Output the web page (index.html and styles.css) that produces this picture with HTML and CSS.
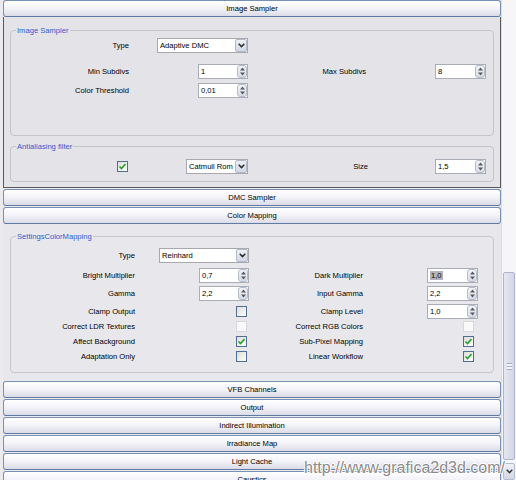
FILE: index.html
```html
<!DOCTYPE html>
<html>
<head>
<meta charset="utf-8">
<title>V-Ray Render Settings</title>
<link rel="stylesheet" href="styles.css">
</head>
<body>
<div class="window">
  <div class="content">
    <div class="rollout-head open">Image Sampler</div>
    <div class="rollout-body active">
      <div class="group g1">
        <span class="group-title">Image Sampler</span>
        <div class="row cols-a r-type">
          <span class="lbl">Type</span>
          <div class="combo w-type"><span class="combo-text">Adaptive DMC</span><span class="combo-btn"><svg width="7" height="5" viewBox="0 0 7 5"><path d="M0.7 0.7 L3.5 3.6 L6.3 0.7" fill="none" stroke="#2b2b2b" stroke-width="1.5"/></svg></span></div>
          <span></span><span></span>
        </div>
        <div class="row cols-a r-min">
          <span class="lbl">Min Subdivs</span>
          <div class="spin"><span class="spin-text">1</span><span class="spin-btn"><svg width="7" height="11" viewBox="0 0 7 11"><path d="M3.5 1.5 L6 4.5 L1 4.5Z M1 6.5 L6 6.5 L3.5 9.5Z" fill="#5a5a5a"/></svg></span></div>
          <span class="lbl">Max Subdivs</span>
          <div class="spin w51"><span class="spin-text">8</span><span class="spin-btn"><svg width="7" height="11" viewBox="0 0 7 11"><path d="M3.5 1.5 L6 4.5 L1 4.5Z M1 6.5 L6 6.5 L3.5 9.5Z" fill="#5a5a5a"/></svg></span></div>
        </div>
        <div class="row cols-a">
          <span class="lbl">Color Threshold</span>
          <div class="spin"><span class="spin-text">0,01</span><span class="spin-btn"><svg width="7" height="11" viewBox="0 0 7 11"><path d="M3.5 1.5 L6 4.5 L1 4.5Z M1 6.5 L6 6.5 L3.5 9.5Z" fill="#5a5a5a"/></svg></span></div>
          <span></span><span></span>
        </div>
      </div>
      <div class="group g2">
        <span class="group-title">Antialiasing filter</span>
        <div class="row cols-a">
          <span class="check on mr1"><svg width="9" height="9" viewBox="0 0 9 9"><path d="M1.5 4.5 L3.5 6.5 L7.5 2" fill="none" stroke="#22a22a" stroke-width="1.6"/></svg></span>
          <div class="combo w-filter"><span class="combo-text">Catmull Rom</span><span class="combo-btn"><svg width="7" height="5" viewBox="0 0 7 5"><path d="M0.7 0.7 L3.5 3.6 L6.3 0.7" fill="none" stroke="#2b2b2b" stroke-width="1.5"/></svg></span></div>
          <span class="lbl lbl-size">Size</span>
          <div class="spin w51"><span class="spin-text">1,5</span><span class="spin-btn"><svg width="7" height="11" viewBox="0 0 7 11"><path d="M3.5 1.5 L6 4.5 L1 4.5Z M1 6.5 L6 6.5 L3.5 9.5Z" fill="#5a5a5a"/></svg></span></div>
        </div>
      </div>
    </div>
    <div class="rollout-head">DMC Sampler</div>
    <div class="rollout-head open">Color Mapping</div>
    <div class="rollout-body">
      <div class="group g3">
        <span class="group-title">SettingsColorMapping</span>
        <div class="row cols-b r-type3">
          <span class="lbl">Type</span>
          <div class="combo w-type3"><span class="combo-text">Reinhard</span><span class="combo-btn"><svg width="7" height="5" viewBox="0 0 7 5"><path d="M0.7 0.7 L3.5 3.6 L6.3 0.7" fill="none" stroke="#2b2b2b" stroke-width="1.5"/></svg></span></div>
          <span></span><span></span>
        </div>
        <div class="row cols-b r-gap3">
          <span class="lbl">Bright Multiplier</span>
          <div class="spin"><span class="spin-text">0,7</span><span class="spin-btn"><svg width="7" height="11" viewBox="0 0 7 11"><path d="M3.5 1.5 L6 4.5 L1 4.5Z M1 6.5 L6 6.5 L3.5 9.5Z" fill="#5a5a5a"/></svg></span></div>
          <span class="lbl">Dark Multiplier</span>
          <div class="spin w51"><span class="spin-text"><span class="sel">1,0</span></span><span class="spin-btn"><svg width="7" height="11" viewBox="0 0 7 11"><path d="M3.5 1.5 L6 4.5 L1 4.5Z M1 6.5 L6 6.5 L3.5 9.5Z" fill="#5a5a5a"/></svg></span></div>
        </div>
        <div class="row cols-b r-gap3">
          <span class="lbl">Gamma</span>
          <div class="spin"><span class="spin-text">2,2</span><span class="spin-btn"><svg width="7" height="11" viewBox="0 0 7 11"><path d="M3.5 1.5 L6 4.5 L1 4.5Z M1 6.5 L6 6.5 L3.5 9.5Z" fill="#5a5a5a"/></svg></span></div>
          <span class="lbl">Input Gamma</span>
          <div class="spin w51"><span class="spin-text">2,2</span><span class="spin-btn"><svg width="7" height="11" viewBox="0 0 7 11"><path d="M3.5 1.5 L6 4.5 L1 4.5Z M1 6.5 L6 6.5 L3.5 9.5Z" fill="#5a5a5a"/></svg></span></div>
        </div>
        <div class="row cols-b">
          <span class="lbl">Clamp Output</span>
          <span class="check mr2"></span>
          <span class="lbl">Clamp Level</span>
          <div class="spin w51"><span class="spin-text">1,0</span><span class="spin-btn"><svg width="7" height="11" viewBox="0 0 7 11"><path d="M3.5 1.5 L6 4.5 L1 4.5Z M1 6.5 L6 6.5 L3.5 9.5Z" fill="#5a5a5a"/></svg></span></div>
        </div>
        <div class="row cols-b">
          <span class="lbl">Correct LDR Textures</span>
          <span class="check off mr2"></span>
          <span class="lbl">Correct RGB Colors</span>
          <span class="check off mr4"></span>
        </div>
        <div class="row cols-b">
          <span class="lbl">Affect Background</span>
          <span class="check on mr2"><svg width="9" height="9" viewBox="0 0 9 9"><path d="M1.5 4.5 L3.5 6.5 L7.5 2" fill="none" stroke="#22a22a" stroke-width="1.6"/></svg></span>
          <span class="lbl">Sub-Pixel Mapping</span>
          <span class="check on mr4"><svg width="9" height="9" viewBox="0 0 9 9"><path d="M1.5 4.5 L3.5 6.5 L7.5 2" fill="none" stroke="#22a22a" stroke-width="1.6"/></svg></span>
        </div>
        <div class="row cols-b">
          <span class="lbl">Adaptation Only</span>
          <span class="check mr2"></span>
          <span class="lbl">Linear Workflow</span>
          <span class="check on mr4"><svg width="9" height="9" viewBox="0 0 9 9"><path d="M1.5 4.5 L3.5 6.5 L7.5 2" fill="none" stroke="#22a22a" stroke-width="1.6"/></svg></span>
        </div>
      </div>
    </div>
    <div class="rollout-head">VFB Channels</div>
    <div class="rollout-head">Output</div>
    <div class="rollout-head">Indirect Illumination</div>
    <div class="rollout-head">Irradiance Map</div>
    <div class="rollout-head">Light Cache</div>
    <div class="rollout-head">Caustics</div>
  </div>
  <div class="scrollbar">
    <div class="track">
      <div class="thumb"><span class="grip"></span></div>
    </div>
    <div class="sb-btn"><svg width="7" height="5" viewBox="0 0 7 5"><path d="M0.7 0.7 L3.5 3.6 L6.3 0.7" fill="none" stroke="#3a3a3a" stroke-width="1.5"/></svg></div>
  </div>
  <div class="watermark">http://www.grafica2d3d.com/</div>
</div>
</body>
</html>
```

FILE: styles.css
```css
* { box-sizing: border-box; }
html, body { margin: 0; padding: 0; }
body {
  font-family: "Liberation Sans", Arial, sans-serif;
  font-size: 7.6px;
  color: #000;
  background: #ebeaee;
}
.window {
  position: relative;
  width: 516px;
  height: 480px;
  overflow: hidden;
  display: flex;
  background: #ebeaee;
}
.content {
  flex: none;
  width: 501px;
  padding-left: 3px;
  display: flex;
  flex-direction: column;
}
.rollout-head {
  flex: none;
  height: 17px;
  margin-bottom: 1px;
  border: 1px solid #7790b3;
  border-bottom-color: #5f7ba3;
  border-radius: 3px;
  background: linear-gradient(#ffffff 0%, #f4f4f9 45%, #dcdce8 100%);
  display: flex;
  align-items: center;
  justify-content: center;
  line-height: 1;
}
.rollout-head.open { margin-bottom: 0; }
.rollout-body {
  flex: none;
  height: 156px;
  margin-bottom: 1px;
  padding: 12px 7px 0 7px;
  background: #e8e7eb;
}
.rollout-body.active {
  height: 171px;
  padding: 13px 6px 0 6px;
  border: 1px solid #59595d;
  border-top: none;
  background: #e4e3e8;
}
.group {
  position: relative;
  border: 1px solid #c7c5cc;
  border-radius: 4px;
}
.group-title {
  position: absolute;
  top: -5px;
  left: 5px;
  padding: 0 1px;
  line-height: 9px;
  color: #2f5ccf;
  background: #e4e3e8;
}
.g3 .group-title { background: #e8e7eb; }
.g1 { height: 106px; padding-top: 7px; }
.g2 { height: 36px; padding-top: 12px; margin-top: 10px; }
.g3 { height: 137px; padding-top: 11px; }

.row {
  display: grid;
  height: 15px;
  align-items: center;
}
.cols-a { grid-template-columns: 118px 119px 118px 120px; }
.cols-b { grid-template-columns: 124px 114px 114px 115px; }
.row > * { justify-self: end; }
.r-type { margin-bottom: 11px; }
.r-min { margin-bottom: 4px; }
.r-type3 { margin-bottom: 5px; }
.r-gap3 { margin-bottom: 3px; }
.lbl { line-height: 1; white-space: nowrap; }
.lbl-size { margin-right: -2px; }

.combo {
  height: 15px;
  display: flex;
  align-items: center;
  background: #fff;
  border: 1px solid #a9a8ae;
}
.w-type { width: 91px; }
.w-filter { width: 62px; }
.w-type3 { width: 90px; }
.combo-text { flex: 1; padding-left: 2px; line-height: 1; white-space: nowrap; }
.combo-btn {
  width: 12px;
  height: 13px;
  display: flex;
  align-items: center;
  justify-content: center;
  margin-right: 0;
  border: 1px solid #b4b9c9;
  border-radius: 2px;
  background: linear-gradient(#eef0f7, #d3d7e6);
}

.spin {
  width: 50px;
  height: 15px;
  display: flex;
  align-items: center;
  background: #fff;
  border: 1px solid #a9adb8;
}
.spin.w51 { width: 51px; }
.spin-text { flex: 1; padding-left: 2px; line-height: 1; }
.sel { background: #b3b3bb; padding: 0 1px; }
.spin-btn {
  width: 10px;
  height: 13px;
  display: flex;
  align-items: center;
  justify-content: center;
  border: 1px solid #b7bccb;
  border-radius: 3px;
  background: linear-gradient(#f2f3f8, #d8dbe7);
}

.check {
  width: 11px;
  height: 11px;
  display: flex;
  align-items: center;
  justify-content: center;
  border: 1px solid #4f6e92;
  background: linear-gradient(135deg, #dcdcd8, #ffffff);
}
.check.off {
  border-color: #d8d7dc;
  background: #f9f9f9;
}
.mr1 { margin-right: 1px; }
.mr2 { margin-right: 2px; }
.mr4 { margin-right: 4px; }

.scrollbar {
  flex: none;
  width: 15px;
  display: flex;
  flex-direction: column;
  background: #f6f5f8;
  border-left: 1px solid #dedde2;
}
.track {
  flex: 1;
  padding: 272px 1px 0 1px;
}
.thumb {
  height: 188px;
  border: 1px solid #aeb4cc;
  border-radius: 2px;
  background: linear-gradient(90deg, #e6e7f2, #d3d6e8);
  display: flex;
  align-items: center;
  justify-content: center;
}
.grip {
  width: 5px;
  height: 7px;
  border-top: 1px solid #a8adc4;
  border-bottom: 1px solid #a8adc4;
  background: linear-gradient(#f4f4f9 0 2px, #a8adc4 2px 3px, #f4f4f9 3px);
}
.sb-btn {
  height: 17px;
  margin: 1px 1px 0 1px;
  border: 1px solid #b4bad0;
  border-radius: 2px;
  background: linear-gradient(#eef0f7, #d3d7e6);
  display: flex;
  align-items: center;
  justify-content: center;
}
.watermark {
  position: absolute;
  left: 304px;
  top: 459px;
  font-family: "Liberation Sans", Arial, sans-serif;
  font-size: 16px;
  line-height: 18px;
  color: #8c8c8c;
  white-space: nowrap;
  text-shadow: 1px 0 #fff, -1px 0 #fff, 0 1px #fff, 0 -1px #fff;
}
```
